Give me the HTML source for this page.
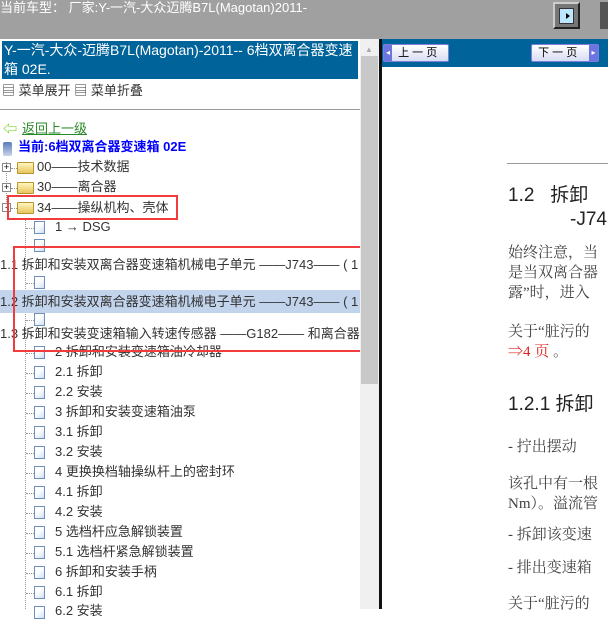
<!DOCTYPE html>
<html><head><meta charset="utf-8"><style>
*{margin:0;padding:0;box-sizing:border-box}
body{width:608px;height:609px;overflow:hidden;position:relative;background:#fff;font-family:"Liberation Sans","Noto Sans CJK SC",sans-serif;font-size:13px;color:#333}
.a{position:absolute;white-space:nowrap}
.row{position:absolute;height:20px;line-height:20px;white-space:nowrap;color:#333;font-size:13px}
.doc{position:absolute;width:11px;height:13px;background:linear-gradient(135deg,#fff 40%,#cfe0f5);border:1px solid #6f8fb8}
.fold{position:absolute;width:17px;height:12px;background:linear-gradient(#fff6c0,#e9c55a);border:1px solid #b8962e;border-radius:1px}
.pm{position:absolute;width:9px;height:9px;border:1px solid #888;background:#fff;font-size:9px;line-height:7px;text-align:center;color:#000}
.dl{position:absolute;border-top:1px dotted #999;height:0}
.vl{position:absolute;border-left:1px dotted #999;width:0}
.s{font-family:"Liberation Serif","Noto Serif CJK SC",serif}
</style></head><body>
<div class="a" style="left:0;top:0;width:608px;height:39px;background:#a0a0a0"></div>
<div class="a" style="left:0;top:-1px;color:#fff;font-size:13px;line-height:18px">当前车型： 厂家:Y-一汽-大众迈腾B7L(Magotan)2011-</div>
<div class="a" style="left:553px;top:2px;width:27px;height:27px;background:#777;border:2px solid #222;border-top-color:#ccc;border-left-color:#ccc"><div style="position:absolute;left:4px;top:4px;width:15px;height:16px;background:#bfe6ff;border:1px solid #333"></div><div style="position:absolute;left:11px;top:9px;width:0;height:0;border:3px solid transparent;border-left:4px solid #000"></div></div>
<div class="a" style="left:600px;top:2px;width:8px;height:27px;background:#555"></div>

<!-- left pane -->
<div class="a" style="left:2px;top:41px;width:356px;height:38px;background:#00639a;color:#fff;font-size:14px;line-height:19px;padding-left:2px;white-space:normal;word-break:break-all">Y-一汽-大众-迈腾B7L(Magotan)-2011-- 6档双离合器变速箱 02E.</div>
<div class="a" style="left:2px;top:82px;font-size:13px;line-height:18px;color:#333">▤ 菜单展开 ▤ 菜单折叠</div>
<div class="a" style="left:0;top:109px;width:360px;height:1px;background:#999"></div>
<div class="a" style="left:3px;top:123px;color:#6c0;font-size:14px;line-height:12px">⇦</div>
<div class="a" style="left:22px;top:120px;color:#2a8a2a;text-decoration:underline;line-height:18px">返回上一级</div>
<div class="a" style="left:3px;top:142px;width:9px;height:14px;background:linear-gradient(#5a7ab8,#c8d4ec);border-radius:2px"></div>
<div class="a" style="left:18px;top:138px;color:#00f;font-weight:bold;line-height:18px">当前:6档双离合器变速箱 02E</div>

<div class="vl" style="left:6px;top:162px;height:50px"></div>
<div class="vl" style="left:25px;top:218px;height:391px"></div>
<div class="pm" style="left:2px;top:163px">+</div><div class="dl" style="left:11px;top:168px;width:6px"></div><div class="fold" style="left:17px;top:162px"></div><div class="row" style="left:37px;top:157px">00——技术数据</div>
<div class="pm" style="left:2px;top:183px">+</div><div class="dl" style="left:11px;top:188px;width:6px"></div><div class="fold" style="left:17px;top:182px"></div><div class="row" style="left:37px;top:177px">30——离合器</div>
<div class="pm" style="left:2px;top:203px">-</div><div class="dl" style="left:11px;top:208px;width:6px"></div><div class="fold" style="left:17px;top:202px"></div><div class="row" style="left:37px;top:198px">34——操纵机构、壳体</div>

<div class="a" style="left:0;top:290px;width:360px;height:23px;background:#c2d3ec"></div>

<div class="dl" style="left:26px;top:228px;width:8px"></div><div class="doc" style="left:34px;top:221px"></div><div class="row" style="left:55px;top:217px">1 → DSG</div>
<div class="dl" style="left:26px;top:246px;width:8px"></div><div class="doc" style="left:34px;top:239px"></div>
<div class="row" style="left:0;top:255px;width:360px;overflow:hidden">1.1 拆卸和安装双离合器变速箱机械电子单元 ——J743—— ( 1</div>
<div class="dl" style="left:26px;top:283px;width:8px"></div><div class="doc" style="left:34px;top:276px"></div>
<div class="row" style="left:0;top:292px;width:360px;overflow:hidden">1.2 拆卸和安装双离合器变速箱机械电子单元 ——J743—— ( 1</div>
<div class="dl" style="left:26px;top:320px;width:8px"></div><div class="doc" style="left:34px;top:313px"></div>
<div class="row" style="left:0;top:324px;width:360px;overflow:hidden">1.3 拆卸和安装变速箱输入转速传感器 ——G182—— 和离合器</div>

<div class="dl" style="left:26px;top:353px;width:8px"></div><div class="doc" style="left:34px;top:346px"></div><div class="row" style="left:55px;top:342px">2 拆卸和安装变速箱油冷却器</div>
<div class="dl" style="left:26px;top:373px;width:8px"></div><div class="doc" style="left:34px;top:366px"></div><div class="row" style="left:55px;top:362px">2.1 拆卸</div>
<div class="dl" style="left:26px;top:393px;width:8px"></div><div class="doc" style="left:34px;top:386px"></div><div class="row" style="left:55px;top:382px">2.2 安装</div>
<div class="dl" style="left:26px;top:413px;width:8px"></div><div class="doc" style="left:34px;top:406px"></div><div class="row" style="left:55px;top:402px">3 拆卸和安装变速箱油泵</div>
<div class="dl" style="left:26px;top:433px;width:8px"></div><div class="doc" style="left:34px;top:426px"></div><div class="row" style="left:55px;top:422px">3.1 拆卸</div>
<div class="dl" style="left:26px;top:453px;width:8px"></div><div class="doc" style="left:34px;top:446px"></div><div class="row" style="left:55px;top:442px">3.2 安装</div>
<div class="dl" style="left:26px;top:473px;width:8px"></div><div class="doc" style="left:34px;top:466px"></div><div class="row" style="left:55px;top:462px">4 更换换档轴操纵杆上的密封环</div>
<div class="dl" style="left:26px;top:493px;width:8px"></div><div class="doc" style="left:34px;top:486px"></div><div class="row" style="left:55px;top:482px">4.1 拆卸</div>
<div class="dl" style="left:26px;top:513px;width:8px"></div><div class="doc" style="left:34px;top:506px"></div><div class="row" style="left:55px;top:502px">4.2 安装</div>
<div class="dl" style="left:26px;top:533px;width:8px"></div><div class="doc" style="left:34px;top:526px"></div><div class="row" style="left:55px;top:522px">5 选档杆应急解锁装置</div>
<div class="dl" style="left:26px;top:553px;width:8px"></div><div class="doc" style="left:34px;top:546px"></div><div class="row" style="left:55px;top:542px">5.1 选档杆紧急解锁装置</div>
<div class="dl" style="left:26px;top:573px;width:8px"></div><div class="doc" style="left:34px;top:566px"></div><div class="row" style="left:55px;top:562px">6 拆卸和安装手柄</div>
<div class="dl" style="left:26px;top:593px;width:8px"></div><div class="doc" style="left:34px;top:586px"></div><div class="row" style="left:55px;top:582px">6.1 拆卸</div>
<div class="doc" style="left:34px;top:606px"></div><div class="row" style="left:55px;top:601px">6.2 安装</div>

<div class="a" style="left:7px;top:195px;width:171px;height:25px;border:2px solid #f03c3c"></div>
<div class="a" style="left:13px;top:246px;width:352px;height:106px;border:2px solid #f03c3c"></div>

<!-- scrollbar -->
<div class="a" style="left:360px;top:39px;width:19px;height:570px;background:#f0f0f0"></div>
<div class="a" style="left:365px;top:45px;color:#aaa;font-size:8px">▲</div>
<div class="a" style="left:361px;top:56px;width:17px;height:328px;background:#c8c8c8"></div>

<!-- right pane -->
<div class="a" style="left:379px;top:39px;width:3px;height:570px;background:#111"></div>
<div class="a" style="left:382px;top:39px;width:226px;height:28px;background:#00639a"></div>
<div class="a" style="left:383px;top:44px;width:66px;height:18px;background:linear-gradient(#fff,#d8dcf4);border:1px solid #7a80d8;border-radius:2px;font-size:11px;line-height:16px;color:#000"><span style="display:inline-block;width:8px;height:16px;background:#6c74e0;vertical-align:top;color:#fff;font-size:8px;text-align:center">◂</span>&nbsp; 上 一 页</div>
<div class="a" style="left:531px;top:44px;width:68px;height:18px;background:linear-gradient(#fff,#d8dcf4);border:1px solid #7a80d8;border-radius:2px;font-size:11px;line-height:16px;color:#000">&nbsp;&nbsp;下 一 页&nbsp;<span style="position:absolute;right:0;top:0;width:9px;height:16px;background:#6c74e0;color:#fff;font-size:8px;text-align:center">▸</span></div>

<div class="a" style="left:507px;top:163px;width:101px;height:1px;background:#999"></div>
<div class="a" style="left:508px;top:184px;font-size:19px;line-height:24px;color:#222">1.2&nbsp;&nbsp; 拆卸</div>
<div class="a" style="left:570px;top:208px;font-size:19px;line-height:24px;color:#222">-J74</div>
<div class="a s" style="left:508px;top:243px;font-size:15px;line-height:20px;color:#444">始终注意，当<br>是当双离合器<br>露”时，进入</div>
<div class="a s" style="left:508px;top:322px;font-size:15px;line-height:20px;color:#444">关于“脏污的<br><span style="color:#e02020">⇒4 页</span> 。</div>
<div class="a" style="left:508px;top:393px;font-size:19px;line-height:24px;color:#222">1.2.1 拆卸</div>
<div class="a s" style="left:508px;top:437px;font-size:15px;line-height:20px;color:#444">- 拧出摆动</div>
<div class="a s" style="left:508px;top:474px;font-size:15px;line-height:20px;color:#444">该孔中有一根<br>Nm）。溢流管</div>
<div class="a s" style="left:508px;top:525px;font-size:15px;line-height:20px;color:#444">- 拆卸该变速</div>
<div class="a s" style="left:508px;top:558px;font-size:15px;line-height:20px;color:#444">- 排出变速箱</div>
<div class="a s" style="left:508px;top:594px;font-size:15px;line-height:20px;color:#444">关于“脏污的</div>
</body></html>
